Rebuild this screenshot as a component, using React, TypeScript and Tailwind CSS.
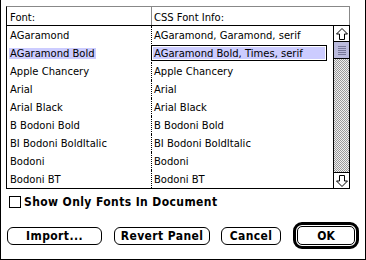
import React from "react";

const rows: [string, string][] = [
  ["AGaramond", "AGaramond, Garamond, serif"],
  ["AGaramond Bold", "AGaramond Bold, Times, serif"],
  ["Apple Chancery", "Apple Chancery"],
  ["Arial", "Arial"],
  ["Arial Black", "Arial Black"],
  ["B Bodoni Bold", "B Bodoni Bold"],
  ["BI Bodoni BoldItalic", "BI Bodoni BoldItalic"],
  ["Bodoni", "Bodoni"],
  ["Bodoni BT", "Bodoni BT"],
];

const boldFont = { fontFamily: '"DejaVu Sans Condensed", "DejaVu Sans", sans-serif' };

function Arrow({ down }: { down?: boolean }) {
  return (
    <svg width="14" height="14" viewBox="0 0 14 14" className={down ? "rotate-180" : ""}>
      <path d="M7 1.5 L12.5 7 L9.5 7 L9.5 12.5 L4.5 12.5 L4.5 7 L1.5 7 Z" fill="white" stroke="black" strokeWidth="1" />
    </svg>
  );
}

function Btn({ label, w }: { label: string; w: string }) {
  return (
    <div
      className={`${w} h-[18px] border border-black rounded-[6px] flex items-center justify-center text-[12px] font-bold tracking-[0.4px]`}
      style={boldFont}
    >
      {label}
    </div>
  );
}

export default function App() {
  return (
    <div
      className="w-[366px] h-[260px] bg-white border-l border-r border-b border-black flex flex-col text-black"
      style={{ fontFamily: '"DejaVu Sans", sans-serif' }}
    >
      <div className="ml-[5px] mt-[6px] w-[344px] flex flex-col">
        <div className="h-[19px] flex border-t border-r border-[#888] border-l-black border-l text-[10px]">
          <div className="w-[144px] pl-[3px] pt-[5px] leading-[11px]">Font:</div>
          <div className="border-l border-[#888] pl-[2px] pt-[5px] leading-[11px] flex-1">CSS Font Info:</div>
        </div>
        <div className="h-[164px] flex border border-black">
          <div className="flex-1 flex flex-col text-[10px]">
            {rows.map(([a, b], i) => (
              <div key={i} className="h-[18px] flex">
                <div className="w-[144px] pl-[2px] flex items-center">
                  <span className={`px-[1px] leading-[11px] ${i === 1 ? "bg-[#ccccff]" : ""}`}>{a}</span>
                </div>
                {i === 1 ? (
                  <div className="w-[176px] my-[1px] border border-black p-[1px] flex">
                    <div className="flex-1 bg-[#ccccff] pl-[1px] flex items-center">{b}</div>
                  </div>
                ) : (
                  <div className="flex-1 border-l border-dotted border-black pl-[2px] flex items-center">{b}</div>
                )}
              </div>
            ))}
          </div>
          <div className="w-[16px] border-l border-black flex flex-col">
            <div className="h-[16px] border-b border-black flex items-center justify-center">
              <Arrow />
            </div>
            <div className="h-[17px] border-b border-black bg-[#bbbbdd] flex flex-col items-center justify-center gap-[1px]">
              {[0, 1, 2, 3, 4].map((k) => (
                <div key={k} className="w-[8px] h-[1px] bg-[#777799]" />
              ))}
            </div>
            <div className="flex-1 bg-[repeating-conic-gradient(#999999_0%_25%,#f0f0f0_0%_50%)] bg-[length:2px_2px]" />
            <div className="h-[16px] border-t border-black flex items-center justify-center">
              <Arrow down />
            </div>
          </div>
        </div>
      </div>
      <div className="mt-[7px] ml-[8px] h-[12px] flex items-center gap-[3px]">
        <div className="w-[12px] h-[12px] border border-black shrink-0" />
        <span className="text-[12px] font-bold tracking-[0.4px] leading-[12px]" style={boldFont}>
          Show Only Fonts In Document
        </span>
      </div>
      <div className="mt-[14px] ml-[6px] flex items-center">
        <Btn label="Import..." w="w-[95px]" />
        <div className="ml-[12px]"><Btn label="Revert Panel" w="w-[96px]" /></div>
        <div className="ml-[11px]"><Btn label="Cancel" w="w-[60px]" /></div>
        <div className="ml-[12px] w-[66px] h-[27px] border-[3px] border-black rounded-[9px] p-[1px] flex">
          <div
            className="flex-1 border border-black rounded-[5px] flex items-center justify-center text-[12px] font-bold"
            style={boldFont}
          >
            OK
          </div>
        </div>
      </div>
    </div>
  );
}
